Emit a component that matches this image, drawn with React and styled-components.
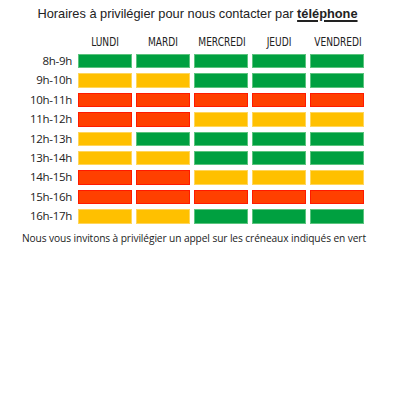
import React from "react";
import styled, { createGlobalStyle } from "styled-components";

const GlobalStyle = createGlobalStyle`
    body {
        margin: 0;
        background: #ffffff;
    }
`;

const COLORS = {
    G: { fill: "#00a040", edge: "#5cc47e" },
    Y: { fill: "#ffc000", edge: "#ffd65c" },
    R: { fill: "#ff4000", edge: "#ff1a00" },
};

const DAYS = ["LUNDI", "MARDI", "MERCREDI", "JEUDI", "VENDREDI"];

const SLOTS = [
    ["8h-9h", "GGGGG"],
    ["9h-10h", "YYGGG"],
    ["10h-11h", "RRRRR"],
    ["11h-12h", "RRYYY"],
    ["12h-13h", "YGGGG"],
    ["13h-14h", "YYGGG"],
    ["14h-15h", "RRYYY"],
    ["15h-16h", "RRRRR"],
    ["16h-17h", "YYGGG"],
];

const Page = styled.div`
    width: 400px;
    height: 400px;
    display: flex;
    flex-direction: column;
    align-items: center;
    padding-top: 6px;
    box-sizing: border-box;
`;

const Title = styled.div`
    font-family: "Liberation Sans", Arial, sans-serif;
    font-size: 12.8px;
    line-height: 16px;
    color: #222;
    margin-left: -5px;

    strong {
        font-weight: bold;
        text-decoration: underline;
        text-underline-offset: 2px;
        text-decoration-thickness: 1.5px;
    }
`;

const Grid = styled.div`
    align-self: flex-start;
    display: grid;
    grid-template-columns: 72px repeat(5, 54px);
    grid-template-rows: 16px;
    grid-auto-rows: 14.4px;
    column-gap: 4px;
    row-gap: 5px;
    margin-top: 11px;
    margin-left: 2px;
`;

const DayHead = styled.div`
    align-self: end;
    font-family: "DejaVu Sans", sans-serif;
    font-stretch: condensed;
    font-size: 12px;
    color: #222;
    text-align: center;
    line-height: 14px;
    white-space: nowrap;
    transform: scaleX(0.84);
`;

const Corner = styled.div``;

const SlotLabel = styled.div`
    font-family: "Open Sans", sans-serif;
    font-size: 11.5px;
    letter-spacing: -0.3px;
    color: #222;
    text-align: right;
    line-height: 14px;
    padding-right: 2px;
`;

const Cell = styled.div`
    background: ${(p) => COLORS[p.$c].fill};
    border: 1px solid ${(p) => COLORS[p.$c].edge};
    box-sizing: border-box;
`;

const Note = styled.div`
    font-family: "Open Sans", sans-serif;
    font-size: 10.2px;
    line-height: 14px;
    color: #222;
    margin-top: 7px;
    margin-left: -12px;
    letter-spacing: -0.1px;
`;

const App = () => {
    return (
        <Page>
            <GlobalStyle />
            <Title>
                Horaires à privilégier pour nous contacter par <strong>téléphone</strong>
            </Title>
            <Grid>
                <Corner />
                {DAYS.map((d) => (
                    <DayHead key={d}>{d}</DayHead>
                ))}
                {SLOTS.map(([label, codes]) => (
                    <React.Fragment key={label}>
                        <SlotLabel>{label}</SlotLabel>
                        {codes.split("").map((c, i) => (
                            <Cell key={i} $c={c} />
                        ))}
                    </React.Fragment>
                ))}
            </Grid>
            <Note>Nous vous invitons à privilégier un appel sur les créneaux indiqués en vert</Note>
        </Page>
    );
};

export default App;
